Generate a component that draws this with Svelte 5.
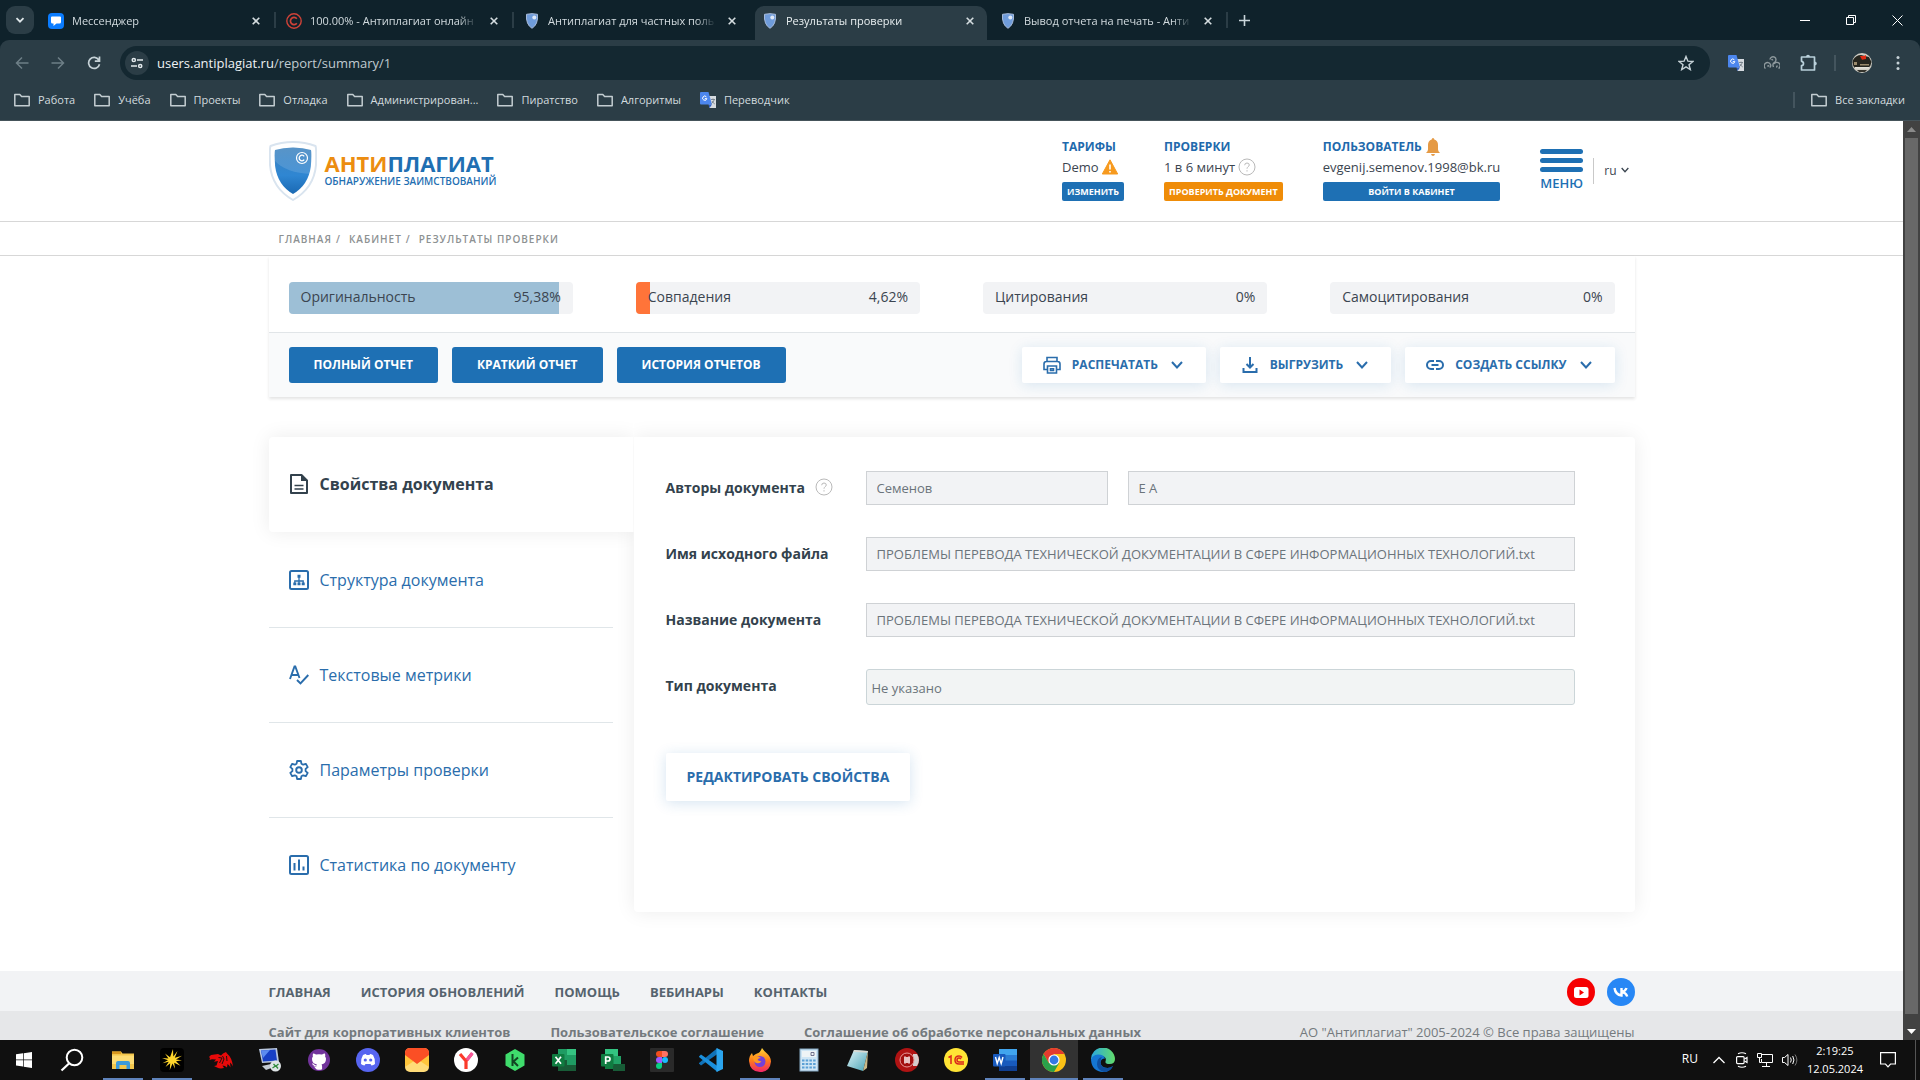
<script>
  const tabs = [
    { title: 'Мессенджер', icon: 'chat' },
    { title: '100.00% - Антиплагиат онлайн', icon: 'copy' },
    { title: 'Антиплагиат для частных поль', icon: 'shield' },
    { title: 'Результаты проверки', icon: 'shield', active: true },
    { title: 'Вывод отчета на печать - Анти', icon: 'shield' }
  ];
  const bookmarks = ['Работа', 'Учёба', 'Проекты', 'Отладка', 'Администрирован...', 'Пиратство', 'Алгоритмы'];
  const scores = [
    { name: 'Оригинальность', value: '95,38%', part: 95, color: 'blue' },
    { name: 'Совпадения', value: '4,62%', part: 5, color: 'orange' },
    { name: 'Цитирования', value: '0%', part: 0, color: 'blue' },
    { name: 'Самоцитирования', value: '0%', part: 0, color: 'blue' }
  ];
  const sections = [
    { name: 'Свойства документа', icon: 'doc', active: true },
    { name: 'Структура документа', icon: 'tree' },
    { name: 'Текстовые метрики', icon: 'spell' },
    { name: 'Параметры проверки', icon: 'gear' },
    { name: 'Статистика по документу', icon: 'chart' }
  ];
  const fileName = 'ПРОБЛЕМЫ ПЕРЕВОДА ТЕХНИЧЕСКОЙ ДОКУМЕНТАЦИИ В СФЕРЕ ИНФОРМАЦИОННЫХ ТЕХНОЛОГИЙ.txt';
  const footerNav = ['ГЛАВНАЯ', 'ИСТОРИЯ ОБНОВЛЕНИЙ', 'ПОМОЩЬ', 'ВЕБИНАРЫ', 'КОНТАКТЫ'];
  const legal = ['Сайт для корпоративных клиентов', 'Пользовательское соглашение', 'Соглашение об обработке персональных данных'];
  const apps = [
    { id: 'explorer', label: 'Проводник', open: true },
    { id: 'spark', label: 'Редактор', open: true },
    { id: 'dragon', label: 'Redragon' },
    { id: 'remote', label: 'Удалённый рабочий стол' },
    { id: 'github', label: 'GitHub' },
    { id: 'discord', label: 'Discord' },
    { id: 'mail', label: 'Почта' },
    { id: 'yandex', label: 'Яндекс' },
    { id: 'hexk', label: 'Kwork' },
    { id: 'excel', label: 'Excel' },
    { id: 'project', label: 'Project' },
    { id: 'figma', label: 'Figma' },
    { id: 'vscode', label: 'VS Code' },
    { id: 'firefox', label: 'Firefox', open: true },
    { id: 'calc', label: 'Калькулятор' },
    { id: 'notepad', label: 'Блокнот' },
    { id: 'disc', label: 'Диск' },
    { id: 'onec', label: '1С' },
    { id: 'word', label: 'Word', open: true },
    { id: 'chrome', label: 'Chrome', open: true, focused: true },
    { id: 'edge', label: 'Edge', open: true }
  ];
</script>

{#snippet folder()}
  <svg class="i16" viewBox="0 0 16 16" fill="none" stroke="#c3cdd1" stroke-width="1.5" stroke-linejoin="round"><path d="M.8 2.4h5l1.8 2h7.6v9.4H.8z" /></svg>
{/snippet}

{#snippet translate()}
  <svg class="i16" viewBox="0 0 16 16"><path d="M7 4h9v12H9.500z" fill="#d6dbe0" /><path d="M0 1q0-1 1-1h7.500l3.500 12.500H1q-1 0-1-1z" fill="#4c86ee" /><path d="M8.500 12.500h3.500L9.500 16z" fill="#2f5fc4" /><path d="M6.400 4.900A2.100 2.100 0 1 0 6.800 6.600H4.800" stroke="#fff" fill="none" /><path d="M11 7.500h4M13 6.500v1M14.300 7.500q-.6 2.500-2.800 4M12 9q1 2 2.800 3" stroke="#6b7680" stroke-width=".8" fill="none" /></svg>
{/snippet}

{#snippet chevron(w)}
  <svg width={w} height={w} viewBox="0 0 12 12" fill="none" stroke="currentColor" stroke-width="2"><path d="M1 3l5 5.500L11 3" /></svg>
{/snippet}

{#snippet help()}
  <svg class="help" viewBox="0 0 18 18" fill="none" stroke="#b9b9b9"><circle cx="9" cy="9" r="8" /><path d="M6.700 7.200Q6.800 5 9 5t2.300 2c0 1.500-2.300 1.800-2.300 3.700M9 12.200v1.300" /></svg>
{/snippet}

{#snippet shield(cls)}
  <svg class={cls} viewBox="0 0 48 60">
    <path d="M24 1Q36 1 46.500 5 47.500 7 47 24 45 47 24 59 3 47 1 24 .5 7 1.500 5 12 1 24 1z" fill="#fff" stroke="#d9e4ef" stroke-width="2" />
    <path d="M24 6.500q10 0 18 2.500.7 3-.1 16-2.400 19-17.900 28Q8.500 44 6.100 25 5.300 12 6 9q8-2.500 18-2.500z" fill="url(#sg)" />
    <path d="M24 6.500q10 0 18 2.500.6 3 0 16v8Q17 32 6 20V9q8-2.500 18-2.500z" fill="#fff" opacity=".13" />
    <circle cx="33" cy="17" r="5.500" fill="none" stroke="#fff" stroke-width="1.200" />
    <path d="M35.200 15.300a2.800 2.800 0 1 0 0 3.400" fill="none" stroke="#fff" stroke-width="1.300" />
  </svg>
{/snippet}

<svg class="defs" width="0" height="0" aria-hidden="true">
  <defs>
    <linearGradient id="sg" x1="0" y1="0" x2="0" y2="1"><stop offset="0" stop-color="#3f85c0" /><stop offset=".6" stop-color="#2f86d2" /><stop offset="1" stop-color="#1a69b3" /></linearGradient>
    <linearGradient id="ff" x1="0" y1="0" x2="0" y2="1"><stop offset="0" stop-color="#ffd53a" /><stop offset=".5" stop-color="#ff8018" /><stop offset="1" stop-color="#f0246a" /></linearGradient>
    <linearGradient id="eg" x1="0" y1="0" x2="1" y2="0"><stop offset="0" stop-color="#2aa7e0" /><stop offset="1" stop-color="#62dc6a" /></linearGradient>
    <linearGradient id="np" x1="0" y1="0" x2="1" y2="1"><stop offset="0" stop-color="#dff4f8" /><stop offset="1" stop-color="#48a3b5" /></linearGradient>
  </defs>
</svg>

<div class="screen">
  <header class="browser">
    <div class="strip">
      <button class="search-tabs" aria-label="Поиск вкладок"><svg width="10" height="10" viewBox="0 0 10 10" fill="none" stroke="#dfe7ea" stroke-width="1.800"><path d="M1.500 3.200L5 6.700l3.500-3.500" /></svg></button>
      <div class="tabs">
        {#each tabs as tab}
          <div class="tab" class:active={tab.active}>
            {#if tab.icon === 'chat'}
              <svg class="i16" viewBox="0 0 16 16"><rect width="16" height="16" rx="4" fill="#0a7cff" /><path d="M4 3.500h8q1 0 1 1V9q0 1.500-1.500 1.500H8.500L5.500 13v-2.500H4.500Q3 10.500 3 9V4.500q0-1 1-1z" fill="#fff" /></svg>
            {:else if tab.icon === 'copy'}
              <svg class="i16" viewBox="0 0 16 16" fill="none" stroke="#cf4238"><circle cx="8" cy="8" r="7.200" stroke-width="1.400" /><path d="M10.800 5.700a3.600 3.600 0 1 0 0 4.600" stroke-width="1.700" /></svg>
            {:else}
              <svg class="i16" viewBox="0 0 16 16"><path d="M2.500 1.300Q8 0 13.500 1.300q.8 10.200-5.500 14-6.300-3.800-5.500-14z" fill="#6f9cdb" stroke="#a9bddc" /><circle cx="10.300" cy="4.600" r="2" fill="#dfe9f8" /></svg>
            {/if}
            <span class="tab-title">{tab.title}</span>
            <button class="bare close" aria-label="Закрыть вкладку"><svg width="8" height="8" viewBox="0 0 8 8" stroke="currentColor" stroke-width="1.600"><path d="M.7.7l6.600 6.600M7.300.7L.7 7.300" /></svg></button>
          </div>
        {/each}
      </div>
      <button class="bare plus" aria-label="Новая вкладка"><svg width="11" height="11" viewBox="0 0 11 11" stroke="#c9d5da" stroke-width="1.600"><path d="M5.500 0v11M0 5.500h11" /></svg></button>
      <div class="win">
        <button class="bare" aria-label="Свернуть"><svg width="10" height="10" viewBox="0 0 10 10" stroke="#fff"><path d="M0 5.500h10" /></svg></button>
        <button class="bare" aria-label="Окно"><svg width="10" height="10" viewBox="0 0 10 10" fill="none" stroke="#fff"><path d="M.5 2.500h7v7h-7zM2.500 2.500v-2h7v7h-2" /></svg></button>
        <button class="bare" aria-label="Закрыть"><svg width="11" height="11" viewBox="0 0 11 11" stroke="#fff"><path d="M.5.5l10 10M10.500.5l-10 10" /></svg></button>
      </div>
    </div>

    <div class="toolbar">
      <button class="bare nav" aria-label="Назад"><svg width="14" height="14" viewBox="0 0 14 14" fill="none" stroke="#6d7f87" stroke-width="1.500"><path d="M13.500 7H1.500M7 1.500L1.500 7 7 12.500" /></svg></button>
      <button class="bare nav" aria-label="Вперёд"><svg width="14" height="14" viewBox="0 0 14 14" fill="none" stroke="#6d7f87" stroke-width="1.500"><path d="M.5 7h12M7 1.500L12.500 7 7 12.500" /></svg></button>
      <button class="bare nav" aria-label="Обновить"><svg width="14" height="14" viewBox="0 0 14 14" fill="none" stroke="#c6d2d7" stroke-width="1.700"><path d="M11.800 4A5.500 5.500 0 1 0 12.500 8.200M12.500.5v4.700H7.800" /></svg></button>
      <div class="omnibox">
        <button class="site" aria-label="Сведения о сайте"><svg width="12" height="12" viewBox="0 0 12 12" fill="none" stroke="#e3eaed" stroke-width="1.500"><circle cx="2.800" cy="3" r="1.600" /><path d="M6 3h6M0 9h6" /><circle cx="9.200" cy="9" r="1.600" /></svg></button>
        <span class="url"><b>users.antiplagiat.ru</b>/report/summary/1</span>
        <button class="bare" aria-label="В закладки"><svg width="16" height="16" viewBox="0 0 16 16" fill="none" stroke="#c6d2d7" stroke-width="1.400"><path d="M8 1.500l1.900 4.700 5 .3-3.900 3.200 1.300 4.900L8 11.900l-4.300 2.700L5 9.700 1.100 6.500l5-.3z" /></svg></button>
      </div>
      <div class="ext">
        {@render translate()}
        <svg class="i16 spaced" viewBox="0 0 16 16" fill="none" stroke="#8f9a9e" stroke-width="1.400"><path d="M1.500 13.500a3.300 3.300 0 1 1 5-4q.8 2-.8 3M6 4.500a3 3 0 1 1 4.500 2.800Q8 8.500 9.500 12M14.500 13.500a3.300 3.300 0 1 0-4.500-4.500M3.500 11.500q1-1.500 1.500 0M7.500 5q1-1 1.300.3M12 12q1.500 0 .8-1.500" /></svg>
        <svg class="spaced" width="18" height="18" viewBox="0 0 18 18" fill="none" stroke="#b9d0da" stroke-width="1.700" stroke-linejoin="round"><path d="M1.500 3h13v13h-13v-4.300q2-.2 2-2.200t-2-2.200z" /><path d="M6 3q0-2.300 2-2.300T10 3zM14.500 7.500q2.300 0 2.300 2t-2.300 2z" fill="#b9d0da" stroke="none" /></svg>
        <i class="vline"></i>
        <svg width="20" height="20" viewBox="0 0 20 20"><circle cx="10" cy="10" r="10" fill="#cfcdc4" /><path d="M1 7q3-5 8-5l8 2 2.500 5q-.5 4-3.500 6H3Q-.5 12 1 7z" fill="#26261f" /><path d="M8 3h4l2-1v4l-4 .8z" fill="#e02a12" /><path d="M2 9h3v3H2zM8 11h9v1.500H8z" fill="#9a8a6c" /><path d="M3 14h14v1.500H3z" fill="#e6e4dc" /><path d="M5 17h10l-2 2H7z" fill="#33332c" /></svg>
        <svg class="dots" width="4" height="16" viewBox="0 0 4 16" fill="#c6d2d7"><circle cx="2" cy="2.500" r="1.500" /><circle cx="2" cy="8" r="1.500" /><circle cx="2" cy="13.500" r="1.500" /></svg>
      </div>
    </div>

    <nav class="bookmarks">
      {#each bookmarks as name}
        <a href="#bookmark">{@render folder()}{name}</a>
      {/each}
      <a href="#translate">{@render translate()}Переводчик</a>
      <div class="all"><i class="vline"></i><a href="#all">{@render folder()}Все закладки</a></div>
    </nav>
  </header>

  <div class="viewport">
    <div class="page">
      <div class="head">
        <div class="wrap head-row">
          <a class="logo" href="#home">
            {@render shield('logo-shield')}
            <span class="logo-text"><span class="brand"><em>АНТИ</em>ПЛАГИАТ</span><span class="tag">ОБНАРУЖЕНИЕ ЗАИМСТВОВАНИЙ</span></span>
          </a>
          <div class="info">
            <div class="cell">
              <a class="cap" href="#plans">ТАРИФЫ</a>
              <span class="val">Demo <svg width="16" height="16" viewBox="0 0 16 16"><path d="M8 .8L15.700 15H.3z" fill="#f79a1e" stroke="#f79a1e" stroke-linejoin="round" /><path d="M8 5.500v5M8 12v1.600" stroke="#fff" stroke-width="1.600" /></svg></span>
              <button class="mini">ИЗМЕНИТЬ</button>
            </div>
            <div class="cell">
              <a class="cap" href="#checks">ПРОВЕРКИ</a>
              <span class="val">1 в 6 минут {@render help()}</span>
              <button class="mini orange">ПРОВЕРИТЬ ДОКУМЕНТ</button>
            </div>
            <div class="cell">
              <a class="cap" href="#user">ПОЛЬЗОВАТЕЛЬ <svg width="14" height="18" viewBox="0 0 14 18" fill="#e59a45"><path d="M7 0q1.300 0 1.300 1.500Q12 2.800 12 7v4.500q0 1.500 2 3.500H0q2-2 2-3.500V7q0-4.200 3.700-5.500Q5.700 0 7 0zM5 16h4q-.5 2-2 2t-2-2z" /></svg></a>
              <span class="val">evgenij.semenov.1998@bk.ru</span>
              <button class="mini">ВОЙТИ В КАБИНЕТ</button>
            </div>
          </div>
          <button class="bare menu"><i></i><i></i><i></i><span>МЕНЮ</span></button>
          <button class="bare lang">ru {@render chevron(8)}</button>
        </div>
      </div>
      <div class="crumbs">
        <nav class="wrap"><a href="#home">ГЛАВНАЯ</a><span>/</span><a href="#cabinet">КАБИНЕТ</a><span>/</span><a href="#results">РЕЗУЛЬТАТЫ ПРОВЕРКИ</a></nav>
      </div>

      <section class="wrap report">
        <div class="scores">
          {#each scores as s}
            <div class="score"><div class="fill {s.color}" style:width="{s.part}%"></div><span>{s.name}</span><span>{s.value}</span></div>
          {/each}
        </div>
        <div class="actions">
          <button class="solid">ПОЛНЫЙ ОТЧЕТ</button>
          <button class="solid">КРАТКИЙ ОТЧЕТ</button>
          <button class="solid">ИСТОРИЯ ОТЧЕТОВ</button>
          <button class="ghost first"><svg width="20" height="18" viewBox="0 0 20 18" fill="none" stroke="currentColor" stroke-width="1.600"><path d="M5 5V1.500h10V5M5 13.500H2V8q0-2.500 2.500-2.500h11q2.500 0 2.500 2.500v5.500h-3M5.500 10h9v7h-9zM8.500 12.800h3v1.700h-3z" /></svg>РАСПЕЧАТАТЬ{@render chevron(12)}</button>
          <button class="ghost"><svg width="20" height="18" viewBox="0 0 20 18" fill="none" stroke="currentColor" stroke-width="2"><path d="M10 1v10M6.500 8l3.500 3.500L13.500 8M3.500 12v4h13v-4" /></svg>ВЫГРУЗИТЬ{@render chevron(12)}</button>
          <button class="ghost"><svg width="20" height="10" viewBox="0 0 20 10" fill="none" stroke="currentColor" stroke-width="2"><path d="M9 1H6a4 4 0 0 0 0 8h3M11 1h3a4 4 0 0 1 0 8h-3M6.500 5h7" /></svg>СОЗДАТЬ ССЫЛКУ{@render chevron(12)}</button>
        </div>
      </section>

      <section class="wrap details">
        <nav class="side">
          {#each sections as s}
            <a href="#section" class:current={s.active}>
              <svg class="i20" viewBox="0 0 20 20" fill="none" stroke="currentColor" stroke-width="2">
                {#if s.icon === 'doc'}
                  <path d="M2 1h10.500L18 6.500V19H2z" stroke-linejoin="round" /><path d="M12 1v6h6z" fill="currentColor" stroke="none" /><path d="M5.500 11.500h9M5.500 15h9" stroke-width="1.600" />
                {:else if s.icon === 'tree'}
                  <rect x="1" y="1" width="18" height="18" rx="1.500" /><path d="M10 6v5M5.800 14v-3h8.400v3M10 11v3" stroke-width="1.300" /><path d="M8.500 4.800h3v3h-3zM4.300 12.500h3v2.800h-3zM8.500 12.500h3v2.800h-3zM12.700 12.500h3v2.800h-3z" fill="currentColor" stroke="none" />
                {:else if s.icon === 'spell'}
                  <path d="M1 14L5.500 1.500h.8L10.500 13M2.500 10h6.500M8 15l3.500 3.500L19.300 10" stroke-width="1.900" />
                {:else if s.icon === 'gear'}
                  <path d="M8.100 1h3.800l.5 2.700 1.800 1 2.600-.9 1.900 3.300-2.100 1.800v2.200l2.100 1.800-1.900 3.300-2.600-.9-1.800 1-.5 2.700H8.100l-.5-2.700-1.800-1-2.600.9-1.900-3.300 2.100-1.800V8.900L1.300 7.100l1.900-3.300 2.600.9 1.800-1z" stroke-width="1.800" stroke-linejoin="round" /><circle cx="10" cy="10" r="2.800" stroke-width="1.900" />
                {:else}
                  <rect x="1" y="1" width="18" height="18" rx="1.500" /><path d="M5.500 8v7.500M10 4.500v11M14.500 11.500v4" />
                {/if}
              </svg>
              {s.name}
            </a>
          {/each}
        </nav>
        <form class="props" onsubmit={(e) => e.preventDefault()}>
          <div class="field">
            <label for="surname">Авторы документа {@render help()}</label>
            <input id="surname" class="short" value="Семенов" disabled />
            <input aria-label="Инициалы" value="Е А" disabled />
          </div>
          <div class="field">
            <label for="file">Имя исходного файла</label>
            <input id="file" value={fileName} disabled />
          </div>
          <div class="field">
            <label for="title">Название документа</label>
            <input id="title" value={fileName} disabled />
          </div>
          <div class="field">
            <label for="type">Тип документа</label>
            <select id="type" disabled><option>Не указано</option></select>
          </div>
          <button class="edit">РЕДАКТИРОВАТЬ СВОЙСТВА</button>
        </form>
      </section>

      <footer>
        <div class="foot-top">
          <nav class="wrap">
            {#each footerNav as name}<a href="#nav">{name}</a>{/each}
            <div class="social">
              <a href="#youtube" aria-label="YouTube"><svg width="28" height="28" viewBox="0 0 28 28"><circle cx="14" cy="14" r="14" fill="#f60002" /><rect x="7" y="9" width="14.500" height="11" rx="2.500" fill="#fff" /><path d="M12.500 11.500l4.500 3-4.500 3z" fill="#f60002" /></svg></a>
              <a href="#vk" aria-label="VK"><svg width="28" height="28" viewBox="0 0 28 28"><circle cx="14" cy="14" r="14" fill="#2787f5" /><path d="M7.500 10q1 6.800 7 7.500V10M14.500 14q4-.8 5-4M14.500 14q4.500.5 5.700 4.500" fill="none" stroke="#fff" stroke-width="2.400" /></svg></a>
            </div>
          </nav>
        </div>
        <div class="foot-low">
          <div class="wrap">
            {#each legal as name}<a href="#legal">{name}</a>{/each}
            <span>АО "Антиплагиат" 2005-2024 © Все права защищены</span>
          </div>
        </div>
      </footer>
    </div>
    <div class="scroll" aria-hidden="true">
      <svg width="9" height="5" viewBox="0 0 9 5" fill="#8a8a8a"><path d="M4.500 0L9 5H0z" /></svg>
      <div class="thumb"></div>
      <svg width="9" height="5" viewBox="0 0 9 5" fill="#fff"><path d="M0 0h9L4.500 5z" /></svg>
    </div>
  </div>

  <div class="taskbar">
    <button class="bare sys" aria-label="Пуск"><svg width="16" height="16" viewBox="0 0 16 16" fill="#fff"><path d="M0 2.300L7 1.300v6.200H0zM7.700 1.200L16 0v7.500H7.700zM0 8.300h7v6.300l-7-1zM7.700 8.300H16V16l-8.300-1.200z" /></svg></button>
    <button class="bare sys find" aria-label="Поиск"><svg width="24" height="24" viewBox="0 0 24 24" fill="none" stroke="#fff" stroke-width="2"><circle cx="14.500" cy="9.500" r="7.800" /><path d="M9 15.500L1.500 22.500" stroke-width="2.200" /></svg></button>
    {#each apps as app}
      <button class="bare app" class:open={app.open} class:focused={app.focused} aria-label={app.label}>
        <svg width="24" height="24" viewBox="0 0 24 24">
          {#if app.id === 'explorer'}
            <path d="M1 3.500h9l1.500 2H23V21H1z" fill="#f3c64c" /><path d="M1 3.500h9V6H1z" fill="#d9981f" /><path d="M1 7.500h22V16H1z" fill="#fddc74" /><path d="M5 21v-6q0-2 2-2h10q2 0 2 2v6h-3.500v-4h-7v4z" fill="#3d9bdc" />
          {:else if app.id === 'spark'}
            <rect width="24" height="24" rx="4" fill="#000" /><path d="M13 1l.3 7.500L17.500 3l-2.700 6.700L22 7.800l-6 3.700 6 .8-6 .9 4.500 4.500-6.300-3 .8 6-2.500-5.300L9.800 22l.4-6.700L5.500 19l3.300-5.200-6.300 1.400 5.500-3L2 10l6.500.6L5 5.500l5 3.700z" fill="#ffd62c" />
          {:else if app.id === 'dragon'}
            <path d="M0 9l2-2 7-1 3 1.500 2-2L17 4l1 1.500q5 4 6 13-1.500-3-3-4l.5 5q-1.500-3-3-3.500l-.5 3.500q-2-2-4.500-2l1.500 2.500q-4 1-7-.5L5 18l2.500-.5L9 13l-4 .8 2-2.300-4-.3-2.500.8.500-2z" fill="#e80a0a" /><path d="M9.500 9.500l3.500.5-2.500 5M13.500 8l1.500 3-2 5M17.500 8l.5 5" stroke="#101010" stroke-width=".9" fill="none" />
          {:else if app.id === 'remote'}
            <path d="M1 1l18-1 2 14L4 15z" fill="#b9c7de" /><path d="M3 2.500l14.500-1 1.500 11L5 13.500z" fill="#173fc4" /><path d="M3 2.500l9-.6-7 8z" fill="#5c8bf0" /><path d="M4 18l9-2 3 3-8 3z" fill="#c4ccd4" /><circle cx="17.500" cy="18" r="5.500" fill="#dfe4e6" /><path d="M14.500 20l3-2-2-2M20.500 16l-2.500 2 2 2.500" stroke="#2f8a3a" stroke-width="1.300" fill="none" />
          {:else if app.id === 'github'}
            <circle cx="12" cy="12" r="11" fill="#71339b" /><path d="M9.300 21.300v-2.600q-3 .5-4-2.200M5 10.800q0-1.300.9-2.400-.5-1.700.2-3 1.300 0 2.900 1.200 3-.8 6 0 1.600-1.200 2.900-1.200.7 1.300.2 3 .9 1.100.9 2.400 0 5-4.500 5.600.6.700.6 2v2.900q-3 1-5.800 0v-2.900q0-1.300.6-2Q5 15.800 5 10.800z" fill="#fff" stroke="none" /><path d="M5.300 15.800q1.200 0 1.900 1.300.7 1.100 2.300.7" fill="none" stroke="#fff" stroke-width="1.200" />
          {:else if app.id === 'discord'}
            <circle cx="12" cy="12" r="12" fill="#5765f0" /><path d="M7 7q2-1 3-1l.5 1h3l.5-1q1 0 3 1 2.500 4 2 9-1.500 1.300-3.500 1.500l-1-1.500h-5l-1 1.500q-2-.2-3.500-1.500-.5-5 2-9z" fill="#fff" /><circle cx="9.300" cy="12" r="1.600" fill="#5765f0" /><circle cx="14.700" cy="12" r="1.600" fill="#5765f0" />
          {:else if app.id === 'mail'}
            <rect width="24" height="24" rx="5" fill="#ffdb78" /><path d="M0 5v14l12-8 12 8V5z" fill="#ffc53b" /><path d="M0 7V5q0-5 5-5h14q5 0 5 5v2L12 16z" fill="#fb4f25" />
          {:else if app.id === 'yandex'}
            <circle cx="12" cy="12" r="12" fill="#fff" /><path d="M6 6l6 7v8M12 13l6-7.500" stroke="#fb3a2a" stroke-width="3.200" fill="none" /><path d="M13 12l5.500-7" stroke="#f4569b" stroke-width="3" />
          {:else if app.id === 'hexk'}
            <path d="M12 1l9.500 5.500v11L12 23l-9.500-5.500v-11z" fill="#3fdc6c" /><path d="M9.500 6v12M15 9.500l-4.500 4L15 18" stroke="#142" stroke-width="2" fill="none" />
          {:else if app.id === 'excel'}
            <path d="M6 1h18v22H6z" fill="#1f9c63" /><path d="M15 1h9v6h-9z" fill="#35c481" /><path d="M6 12h9v11H6zM15 17h9v6h-9z" fill="#185c37" /><rect y="6" width="12.500" height="12.500" rx="1" fill="#107c41" /><path d="M3.500 8.800l5.500 7M9 8.800l-5.500 7" stroke="#fff" stroke-width="1.700" />
          {:else if app.id === 'project'}
            <path d="M4 1h13v7H4z" fill="#33c481" /><path d="M8 8h12v8H8z" fill="#21a366" /><path d="M12 16h12v7H12z" fill="#185c37" /><path d="M4 17h8v4H4z" fill="#107c41" /><rect y="6" width="12.500" height="12.500" rx="1" fill="#107c41" /><path d="M4.700 16V9h2.300q2 0 2 2t-2 2H4.700" stroke="#fff" stroke-width="1.700" fill="none" />
          {:else if app.id === 'figma'}
            <rect width="24" height="24" rx="1" fill="#2a2a2a" /><path d="M12 3v6H9a3 3 0 0 1 0-6z" fill="#f24e1e" /><path d="M12 3h3a3 3 0 0 1 0 6h-3z" fill="#ff7262" /><path d="M12 9v6H9a3 3 0 0 1 0-6z" fill="#a259ff" /><circle cx="15" cy="12" r="3" fill="#1abcfe" /><path d="M12 15v3a3 3 0 1 1-3-3z" fill="#0acf83" />
          {:else if app.id === 'vscode'}
            <path d="M0 15.500l2 2L18.500 6V0L0 15z" fill="#1072b8" /><path d="M0 8.500l2-2L18.500 18v6L0 9z" fill="#1a8fdc" /><path d="M17.500 0L24 3v18l-6.500 3z" fill="#2ba5ee" />
          {:else if app.id === 'firefox'}
            <path d="M14 0q2 3 4.500 5 4.500 4 4.500 8.500Q22 24 12 24T1 13q0-5 3-8l1 3q2-2 4-2.500Q12 5 14 0z" fill="url(#ff)" /><circle cx="12" cy="13.500" r="5.500" fill="#7440d8" /><path d="M5 9q4-2 8 1-3 0-3.500 2 2 1.500 4 1-1.500 3-5 2T5 9z" fill="#ff9a1f" />
          {:else if app.id === 'calc'}
            <rect x="3" y="1" width="18" height="22" fill="#cfe6f5" stroke="#86a9c4" /><path d="M5 3h14v6H5z" fill="#eef4f6" /><path d="M14 4.500h3v3h-3z" fill="none" stroke="#557" stroke-width=".8" /><path d="M5 12.500h14M5 16h14M5 19.500h14" stroke="#5ba0d5" stroke-width="2.200" stroke-dasharray="2.500 1.200" />
          {:else if app.id === 'notepad'}
            <path d="M8 2l14 1-5 20L1 18z" fill="url(#np)" /><path d="M8 2l14 1-.4 1.800L7.300 3.800z" fill="#d9d9d2" /><path d="M22 3l-1 17-4 3z" fill="#c9b787" />
          {:else if app.id === 'disc'}
            <circle cx="12" cy="12" r="12" fill="#b01313" /><path d="M18 6h4q4 6 0 12h-4z" fill="#d5cccc" /><circle cx="12" cy="12" r="7" fill="#a30f0f" stroke="#e89a9a" /><path d="M10 8.500v7M14 8.500v7M12 9v6" stroke="#fff" stroke-width="1.500" />
          {:else if app.id === 'onec'}
            <circle cx="12" cy="12" r="12" fill="#ffe435" /><path d="M4.500 9.500L7 8v8M18 9.500q-1-1.500-3-1.500-4 0-4 4t4 4h5M17 11q-.8-1-2-1-2 0-2 2t2 2h5" stroke="#d9261c" stroke-width="1.500" fill="none" />
          {:else if app.id === 'word'}
            <path d="M6 1h18v22H6z" fill="#185abd" /><path d="M6 1h18v6H6z" fill="#41a5ee" /><path d="M6 7h18v5.500H6z" fill="#2b7cd3" /><path d="M6 18h18v5H6z" fill="#103f91" /><rect y="6" width="12.500" height="12.500" rx="1" fill="#185abd" /><path d="M2.500 9l1.700 6.500 2-6 2 6L10 9" stroke="#fff" stroke-width="1.400" fill="none" />
          {:else if app.id === 'chrome'}
            <circle cx="12" cy="12" r="12" fill="#fbc116" /><path d="M1.600 6A12 12 0 0 1 22.400 6H12L6.800 15z" fill="#e33b2e" /><path d="M1.600 6A12 12 0 0 0 12 24l5.200-9H6.800z" fill="#2aa14b" /><circle cx="12" cy="12" r="5.600" fill="#fff" /><circle cx="12" cy="12" r="4.400" fill="#3478e5" />
          {:else}
            <path d="M0 12A12 12 0 0 1 24 11q0 5-5.500 5-4.500 0-4-2.500Q16 9 11 8 4 7.500 0 12z" fill="url(#eg)" /><path d="M0 12q1-5 7-5.500 6 0 7 4-4 0-4.500 4 .5 5 7 5.500 3 0 5.500-2-3 6-10 6Q1 23.500 0 12z" fill="#1576d2" /><path d="M9.500 14.500Q10 20 16.500 20q3 0 5.500-2-3 6-9 6-7-2-7-8t5-7q-2 2-1.500 5.500z" fill="#0f4f9f" />
          {/if}
        </svg>
      </button>
    {/each}
    <div class="tray">
      <span class="kb">RU</span>
      <svg width="12" height="8" viewBox="0 0 12 8" fill="none" stroke="#fff" stroke-width="1.300"><path d="M.5 7L6 1.500 11.500 7" /></svg>
      <svg class="cam" width="12" height="16" viewBox="0 0 12 16" fill="none" stroke="#fff" stroke-width="1.200"><rect x=".6" y="4.600" width="7.500" height="7" rx="1" /><path d="M8.500 7l2.500-1.500v5L8.500 9M2 1.800Q6-.3 10 1.800M2 14.200q4 2.100 8 0" /></svg>
      <svg width="16" height="14" viewBox="0 0 16 14" fill="none" stroke="#fff"><path d="M5 1.500h10.500v8H4.500V6M9.500 9.500v4M5 13.500h8M.5.500h4v4h-4zM2.500 4.500v5H4" /></svg>
      <svg width="16" height="14" viewBox="0 0 16 14" fill="none" stroke="#fff"><path d="M.5 4.500h2L6 1.500v11l-3.500-3h-2zM8.500 4.500q1.500 2.500 0 5M10.700 3q2.500 4 0 8" /><path d="M13 1.500q3.800 5.500 0 11" stroke="#777" /></svg>
      <time><span>2:19:25</span><span>12.05.2024</span></time>
      <svg class="note" width="16" height="16" viewBox="0 0 16 16" fill="none" stroke="#fff" stroke-width="1.200"><path d="M.6.600h14.800v11.400h-4.900L8 14.800 5.500 12H.6z" /></svg>
      <i class="desk"></i>
    </div>
  </div>
</div>

<style>
  :global(body) { margin: 0; background: #fff; }
  .screen, .screen :global(*) { box-sizing: border-box; }
  .screen { height: 100vh; display: flex; flex-direction: column; overflow: hidden; font-family: 'Open Sans', 'Noto Sans', sans-serif; color: #3b4550; }
  .defs { position: absolute; }
  svg { flex: none; display: block; }
  a { color: inherit; text-decoration: none; }
  button, input, select { font: inherit; color: inherit; }
  button { border: 0; padding: 0; cursor: pointer; }
  .bare { background: none; display: flex; align-items: center; justify-content: center; }
  .i16 { width: 16px; height: 16px; }
  .i20 { width: 20px; height: 20px; }

  .browser { flex: none; background: #0f222b; color: #d2dbdf; font-size: 11px; }
  .strip { height: 40px; display: flex; padding-left: 6px; }
  .search-tabs { width: 28px; height: 28px; margin-top: 6px; border-radius: 9px; background: #2b3d46; display: grid; place-items: center; }
  .tabs { display: flex; margin-left: 7px; flex: 0 1 1190px; min-width: 0; }
  .tab { flex: 1 1 0; min-width: 0; position: relative; display: flex; align-items: center; height: 34px; margin-top: 6px; padding: 0 19px 5px 7px; }
  .tab:not(.active)::after { content: ''; position: absolute; right: 3px; top: 6px; width: 2px; height: 16px; background: #2b3d46; }
  .tab:has(+ .active)::after { display: none; }
  .tab.active { background: linear-gradient(#2b3d46, #2b3d46) 0 0 / calc(100% - 20px) 100% no-repeat; color: #e9eff1; border-radius: 9px 0 0 0; }
  .tab.active::before { content: ''; position: absolute; right: 6px; top: 0; width: 16px; height: 34px; border-radius: 0 10px 0 0; background: #2b3d46; }
  .tab-title { flex: 1; min-width: 0; margin-left: 8px; white-space: nowrap; overflow: hidden; mask-image: linear-gradient(90deg, #000 calc(100% - 20px), transparent); }
  .close { margin-left: 12px; color: #d5dde0; position: relative; }
  .plus { width: 26px; }
  .win { margin-left: auto; display: flex; }
  .win button { width: 46px; }
  .toolbar { height: 46px; padding: 0 20px 0 8px; border-radius: 9px 9px 0 0; background: #2b3d46; display: flex; align-items: center; }
  .nav { width: 28px; margin-right: 8px; }
  .omnibox { flex: 1; height: 34px; margin-left: 4px; padding: 0 16px 0 5px; border-radius: 17px; background: #142831; display: flex; align-items: center; font-size: 13px; }
  .site { width: 24px; height: 24px; border-radius: 12px; background: #2b3d46; display: grid; place-items: center; }
  .url { flex: 1; margin-left: 8px; color: #c0cbd0; }
  .url b { font-weight: 400; color: #eef2f4; }
  .ext { display: flex; align-items: center; gap: 16px; margin-left: 18px; }
  .spaced { margin-left: 4px; }
  .dots { margin-left: 8px; }
  .vline { width: 2px; height: 16px; background: #44555e; }
  .bookmarks { height: 35px; padding: 0 15px 7px 14px; background: #2b3d46; border-bottom: 1px solid #45535a; display: flex; align-items: center; gap: 19px; }
  .bookmarks a { display: flex; align-items: center; gap: 8px; white-space: nowrap; }
  .all { margin-left: auto; display: flex; align-items: center; gap: 16px; }

  .viewport { flex: 1; min-height: 0; display: flex; overflow: hidden; }
  .page { flex: 1; min-width: 0; background: #fff; }
  .wrap { max-width: 1366px; margin: 0 auto; }
  .scroll { flex: none; width: 17px; background: #424242; display: flex; flex-direction: column; align-items: center; padding: 6px 0; gap: 6px; }
  .thumb { flex: 1; width: 13px; background: #686868; margin-bottom: 9px; }

  .head { height: 101px; border-bottom: 1px solid #d7d7d7; }
  .head-row { height: 100px; display: flex; align-items: center; }
  .logo { display: flex; align-items: center; gap: 8px; }
  .logo-shield { width: 48px; height: 60px; }
  .logo-text { display: flex; flex-direction: column; padding-bottom: 5px; color: #1f6fb2; white-space: nowrap; }
  .brand { font-size: 22px; line-height: 24px; font-weight: 700; }
  .brand em { font-style: normal; color: #ec8d10; }
  .tag { font-size: 10px; line-height: 12px; font-weight: 600; }
  .info { margin-left: auto; padding-bottom: 4px; display: flex; gap: 40px; }
  .cell { display: flex; flex-direction: column; font-size: 13px; line-height: 20px; white-space: nowrap; }
  .cap { font-weight: 700; color: #2169ac; display: flex; align-items: center; gap: 4px; font-size: 12px; }
  .val { display: flex; align-items: center; gap: 3px; }
  .help { width: 18px; height: 18px; }
  .mini { height: 19px; margin-top: 5px; padding: 0 5px; border-radius: 2px; background: #1e70b4; color: #fff; font-size: 9px; line-height: 19px; font-weight: 700; }
  .orange { background: #ef8c08; }
  .menu { flex-direction: column; gap: 4px; width: 43px; margin-left: 40px; padding-bottom: 3px; color: #1e70b4; font-size: 13px; font-weight: 600; line-height: 14px; }
  .menu i { width: 43px; height: 5px; border-radius: 3px; background: #1e70b4; }
  .lang { gap: 4px; height: 26px; margin: 0 6px 0 10px; padding: 0 0 2px 10px; border-left: 1px solid #c9c9c9; font-size: 12px; }
  .crumbs { border-bottom: 1px solid #d7d7d7; height: 34px; font-size: 10px; font-weight: 600; letter-spacing: 1px; color: #8d9192; }
  .crumbs nav { padding: 0 10px; line-height: 34px; display: flex; }
  .crumbs span { margin: 0 8px 0 4px; }

  .report { background: #fff; box-shadow: 0 2px 3px #0000001c; }
  .scores { padding: 26px 20px 18px; display: grid; grid-template-columns: repeat(4, 1fr); gap: 63px; border-bottom: 1px solid #e1e5e8; }
  .score { position: relative; height: 32px; padding: 0 12px 3px; border-radius: 4px; overflow: hidden; background: #f2f3f5; display: flex; align-items: center; justify-content: space-between; font-size: 14px; }
  .score span { position: relative; }
  .fill { position: absolute; left: 0; top: 0; bottom: 0; }
  .blue { background: #9dbfd6; }
  .orange.fill { background: #ff7439; }
  .actions { padding: 14px 20px; display: flex; gap: 14px; background: #f9fafb; font-size: 12px; font-weight: 700; white-space: nowrap; }
  .solid { height: 36px; padding: 0 25px 2px; border-radius: 3px; background: #1e70b4; color: #fff; }
  .ghost { height: 36px; padding: 0 23px 1px 20px; border-radius: 2px; background: #fff; color: #2a6dac; box-shadow: 0 2px 14px #1e70b426; display: flex; align-items: center; gap: 10px; }
  .ghost svg:last-child { margin-left: 3px; }
  .first { margin-left: auto; }

  .details { margin-top: 40px; display: flex; }
  .side { flex: 0 0 365px; }
  .side a { height: 95px; margin-right: 21px; padding-left: 20px; display: flex; align-items: center; gap: 11px; font-size: 16px; color: #2a6dac; }
  .side a:nth-child(n + 3) { border-top: 1px solid #e0e6e9; }
  .side .current { margin-right: 0; padding-bottom: 1px; border-radius: 4px 0 0 4px; background: #fff; font-weight: 700; color: #33424d; box-shadow: 0 0 20px #00000014; clip-path: inset(-20px 0 -20px -20px); }
  .props { flex: 1; padding: 34px 60px 111px 32px; background: #fff; border-radius: 0 4px 4px 4px; box-shadow: 0 0 20px #00000014; clip-path: polygon(-20px 95px, 0 95px, 0 -20px, calc(100% + 20px) -20px, calc(100% + 20px) calc(100% + 20px), -20px calc(100% + 20px)); }
  .field { display: flex; gap: 20px; margin-bottom: 32px; }
  label { flex: 0 0 180px; height: 34px; padding-bottom: 2px; display: flex; align-items: center; gap: 10px; white-space: nowrap; font-size: 14px; font-weight: 700; color: #33424d; }
  .field input { flex: 1; min-width: 0; height: 34px; padding: 0 10px; border: 1px solid #cfd2d5; background: #f2f3f5; color: #6b747b; font-size: 13px; border-radius: 0; }
  .field .short { flex: 0 0 242px; }
  select { flex: 1; height: 36px; padding: 2px 5px 0; appearance: none; border: 1px solid #cbd5d8; border-radius: 3px; background: #f2f4f4; color: #6b747b; font-size: 13px; opacity: 1; }
  .edit { height: 48px; margin-top: 16px; padding: 0 21px 2px; border-radius: 2px; background: #fff; color: #2a6dac; font-size: 14px; font-weight: 700; box-shadow: 0 2px 14px #1e70b430; }

  footer { margin-top: 59px; }
  .foot-top { background: #f2f3f5; font-size: 13px; font-weight: 700; color: #56636e; }
  .foot-top nav { height: 40px; padding-top: 2px; display: flex; align-items: center; gap: 30px; }
  .social { margin-left: auto; display: flex; gap: 12px; }
  .foot-low { background: #e6e7e9; color: #747a7e; font-size: 13px; }
  .foot-low .wrap { height: 42px; display: flex; align-items: center; gap: 40px; white-space: nowrap; }
  .foot-low a { font-weight: 700; }
  .foot-low span { margin-left: auto; }

  .taskbar { flex: none; height: 40px; background: #101010; display: flex; color: #fff; }
  .sys { width: 48px; }
  .find { margin-right: 3px; }
  .app { width: 48px; margin-right: 1px; border-bottom: 2px solid transparent; padding-top: 2px; }
  .app.open { background: linear-gradient(#5f83bb, #5f83bb) center bottom / 40px 2px no-repeat border-box; }
  .app.open.focused { background: linear-gradient(#5f83bb, #5f83bb) center bottom / 48px 2px no-repeat border-box #323232; }
  .tray { margin-left: auto; display: flex; align-items: center; gap: 9px; font-size: 11px; }
  .kb { margin-right: 6px; padding-bottom: 3px; font-size: 12px; }
  .cam { margin-left: 2px; }
  time { display: flex; flex-direction: column; align-items: center; line-height: 18px; }
  .note { margin-left: 8px; }
  .desk { width: 1px; height: 40px; margin: 0 4px 0 10px; background: #555; }
</style>
